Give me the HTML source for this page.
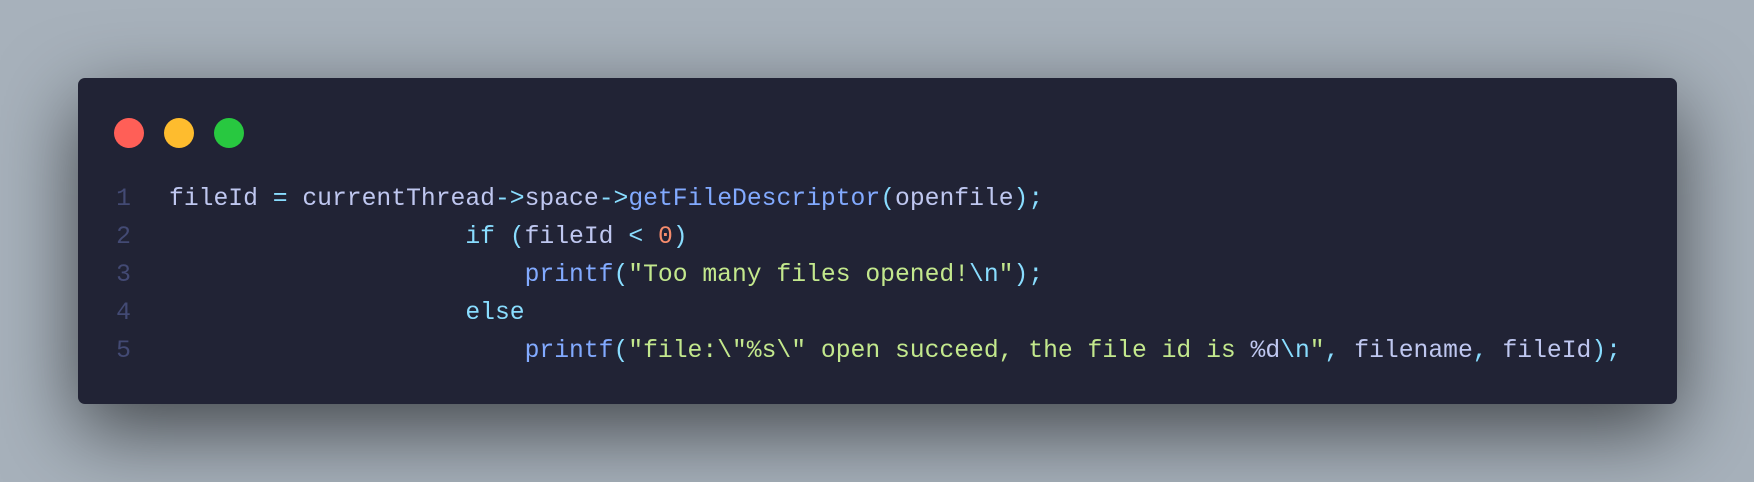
<!DOCTYPE html>
<html><head><meta charset="utf-8"><style>
html,body{margin:0;padding:0;width:1754px;height:482px;overflow:hidden;background:#a7b1bb;}
.card{position:absolute;left:78px;top:78px;width:1599px;height:326px;background:#212335;border-radius:7px;box-shadow:0 26px 80px rgba(0,0,0,0.6);}
.dot{position:absolute;top:40px;width:30px;height:30px;border-radius:50%;}
pre{position:absolute;left:0;top:102px;margin:0;font-family:"Liberation Mono",monospace;font-size:24.7px;line-height:38px;color:#bfc7f0;}
.ln{display:inline-block;width:53px;text-align:right;color:#434a74;}
.c{color:#89ddff}.f{color:#82aaff}.s{color:#c3e88d}.n{color:#f78c6c}
.row{white-space:pre}
.code{position:absolute;left:91px}
</style></head><body>
<div class="card">
<div class="dot" style="left:36px;background:#ff5f57"></div>
<div class="dot" style="left:86px;background:#febc2e"></div>
<div class="dot" style="left:136px;background:#28c840"></div>
<pre><div class="row"><span class="ln">1</span><span class="code">fileId <span class="c">=</span> currentThread<span class="c">-&gt;</span>space<span class="c">-&gt;</span><span class="f">getFileDescriptor</span><span class="c">(</span>openfile<span class="c">);</span></span></div><div class="row"><span class="ln">2</span><span class="code">                    <span class="c">if</span> <span class="c">(</span>fileId <span class="c">&lt;</span> <span class="n">0</span><span class="c">)</span></span></div><div class="row"><span class="ln">3</span><span class="code">                        <span class="f">printf</span><span class="c">(</span><span class="s">"Too many files opened!</span><span class="c">\n</span><span class="s">"</span><span class="c">);</span></span></div><div class="row"><span class="ln">4</span><span class="code">                    <span class="c">else</span></span></div><div class="row"><span class="ln">5</span><span class="code">                        <span class="f">printf</span><span class="c">(</span><span class="s">"file:\"%s\" open succeed, the file id is </span>%d<span class="c">\n</span><span class="s">"</span><span class="c">,</span> filename<span class="c">,</span> fileId<span class="c">);</span></span></div></pre>
</div>
</body></html>
